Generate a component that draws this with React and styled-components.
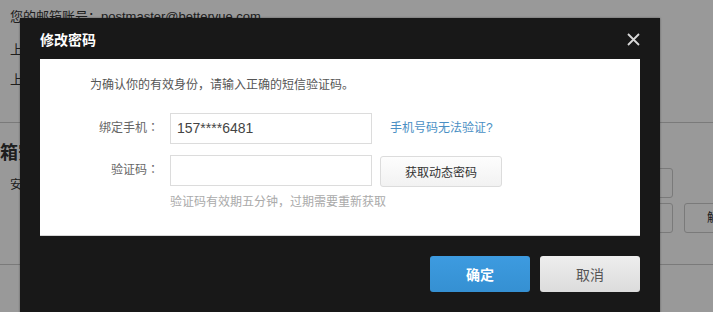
import React from "react";
import styled, { createGlobalStyle } from "styled-components";

const cjk = `"Liberation Sans", "Noto Sans CJK SC", sans-serif`;

const Global = createGlobalStyle`
  html, body {
    margin: 0;
    padding: 0;
    background: #fff;
  }
  body {
    font-family: ${cjk};
    color: #333;
  }
`;

const Page = styled.div`
  position: relative;
  width: 713px;
  height: 312px;
  overflow: hidden;
`;

/* the mail settings page behind the dialog */
const Behind = styled.div`
  display: flex;
  flex-direction: column;
  padding-top: 9px;
`;

const InfoLine = styled.div`
  font-size: 13px;
  line-height: 16px;
  height: ${props => props.h || 30}px;
  padding-left: 10px;
  color: #333;
  white-space: nowrap;
`;

const Divider = styled.div`
  height: 1px;
  background: #ccc;
`;

const Section = styled.div`
  display: flex;
  justify-content: space-between;
  height: 141px;
`;

const SectionLeft = styled.div`
  display: flex;
  flex-direction: column;
  padding-top: 19px;
`;

const SectionTitle = styled.div`
  font-size: 18px;
  font-weight: bold;
  line-height: 22px;
  color: #333;
  white-space: nowrap;
`;

const SectionText = styled.div`
  font-size: 12px;
  line-height: 16px;
  padding: 13px 0 0 10px;
  color: #333;
  white-space: nowrap;
`;

const SectionRight = styled.div`
  display: flex;
  flex-direction: column;
  align-items: flex-start;
  gap: 5px;
  padding-top: 45px;
  width: 100px;
  flex-shrink: 0;
`;

const ButtonRow = styled.div`
  display: flex;
  gap: 11px;
`;

const GhostButton = styled.div`
  box-sizing: border-box;
  flex-shrink: 0;
  width: ${props => props.w || 60}px;
  height: 30px;
  border: 1px solid #ccc;
  border-radius: 3px;
  font-size: 12px;
  line-height: 28px;
  text-align: ${props => (props.left ? "left" : "center")};
  padding-left: ${props => (props.left ? 22 : 0)}px;
  background: #fff;
  color: #333;
  white-space: nowrap;
  overflow: hidden;
`;

const Overlay = styled.div`
  position: absolute;
  inset: 0;
  background: rgba(0, 0, 0, 0.4);
`;

/* dialog */
const Dialog = styled.div`
  position: absolute;
  left: 20px;
  top: 18px;
  width: 640px;
  height: 320px;
  background: #181818;
  box-shadow: 0 0 2px rgba(0, 0, 0, 0.4);
  display: flex;
  flex-direction: column;
`;

const DialogHead = styled.div`
  height: 41px;
  display: flex;
  align-items: center;
  justify-content: space-between;
  padding: 0 19px 0 20px;
`;

const DialogTitle = styled.div`
  color: #fff;
  font-size: 14px;
  font-weight: bold;
  padding-top: 1px;
`;

const Close = styled.div`
  width: 16px;
  height: 16px;
  display: flex;
  align-items: center;
  justify-content: center;
  margin-top: 1px;
`;

const Body = styled.div`
  margin: 0 20px;
  background: #fff;
  height: 158px;
  border-bottom: 1px solid #d6d6d6;
  padding: 18px 0 0 50px;
`;

const Intro = styled.div`
  font-size: 12px;
  line-height: 16px;
  color: #555;
`;

const Form = styled.div`
  display: flex;
  flex-direction: column;
  gap: 11px;
  margin-top: 20px;
`;

const Row = styled.div`
  display: flex;
  align-items: flex-start;
`;

const Label = styled.div`
  width: 69px;
  padding-right: 11px;
  height: 31px;
  line-height: 31px;
  text-align: right;
  font-size: 12px;
  font-family: "Liberation Sans", "Noto Sans CJK TC", sans-serif;
  color: #666;
`;

const Field = styled.div`
  box-sizing: border-box;
  width: 202px;
  height: 31px;
  border: 1px solid #dcdcdc;
  font-size: 14px;
  line-height: 29px;
  padding-left: 6px;
  color: #444;
  font-family: "Liberation Sans", Arial, sans-serif;
`;

const Link = styled.a`
  font-size: 12px;
  line-height: 31px;
  color: #4a8fc4;
  margin-left: 18px;
  text-decoration: none;
`;

const CodeButton = styled.div`
  box-sizing: border-box;
  width: 122px;
  height: 31px;
  margin-left: 8px;
  margin-top: 1px;
  border: 1px solid #dcdcdc;
  border-radius: 3px;
  background: linear-gradient(#fdfdfd, #f2f2f2);
  font-size: 12px;
  color: #333;
  display: flex;
  align-items: center;
  justify-content: center;
`;

const Hint = styled.div`
  font-size: 12px;
  line-height: 16px;
  color: #aaa;
  margin: 7px 0 0 80px;
`;

const Footer = styled.div`
  display: flex;
  justify-content: flex-end;
  gap: 10px;
  padding: 20px 20px 0 0;
`;

const Btn = styled.div`
  width: 100px;
  height: 36px;
  border-radius: 3px;
  display: flex;
  align-items: center;
  justify-content: center;
  font-size: 14px;
  color: ${props => (props.primary ? "#fff" : "#555")};
  font-weight: ${props => (props.primary ? "bold" : "normal")};
  background: ${props =>
    props.primary
      ? "linear-gradient(#3d9be0, #3590d2)"
      : "linear-gradient(#eeeeee, #dcdcdc)"};
`;

export default function App() {
  return (
    <Page>
      <Global />
      <Behind>
        <InfoLine h={33}>您的邮箱账号：postmaster@bettervue.com</InfoLine>
        <InfoLine h={30}>上次登录时间：2017-03-12 10:24</InfoLine>
        <InfoLine h={50}>上次登录地点：北京</InfoLine>
        <Divider />
        <Section>
          <SectionLeft>
            <SectionTitle>箱安全</SectionTitle>
            <SectionText>安全等级：中</SectionText>
          </SectionLeft>
          <SectionRight>
            <GhostButton>修改</GhostButton>
            <ButtonRow>
              <GhostButton>修改</GhostButton>
              <GhostButton w={50} left>
                解绑
              </GhostButton>
            </ButtonRow>
          </SectionRight>
        </Section>
        <Divider />
      </Behind>
      <Overlay />
      <Dialog>
        <DialogHead>
          <DialogTitle>修改密码</DialogTitle>
          <Close>
            <svg width="13" height="13" viewBox="0 0 13 13">
              <path
                d="M1 1 L12 12 M12 1 L1 12"
                stroke="#d8d8d8"
                strokeWidth="1.8"
                fill="none"
              />
            </svg>
          </Close>
        </DialogHead>
        <Body>
          <Intro>为确认你的有效身份，请输入正确的短信验证码。</Intro>
          <Form>
            <Row>
              <Label>绑定手机：</Label>
              <Field>157****6481</Field>
              <Link href="#">手机号码无法验证?</Link>
            </Row>
            <div>
              <Row>
                <Label>验证码：</Label>
                <Field />
                <CodeButton>获取动态密码</CodeButton>
              </Row>
              <Hint>验证码有效期五分钟，过期需要重新获取</Hint>
            </div>
          </Form>
        </Body>
        <Footer>
          <Btn primary>确定</Btn>
          <Btn>取消</Btn>
        </Footer>
      </Dialog>
    </Page>
  );
}
